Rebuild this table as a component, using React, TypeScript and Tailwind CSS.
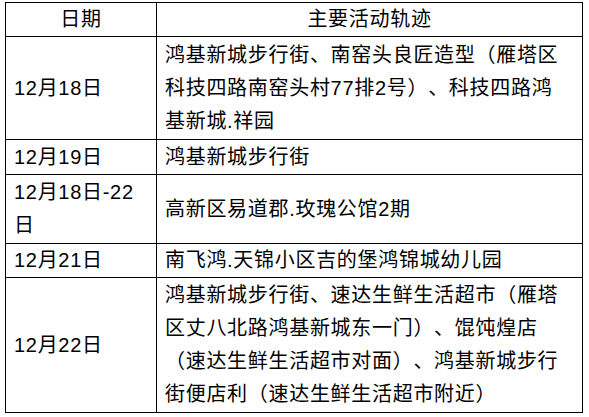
const rows = [
  {
    date: "12月18日",
    place: "鸿基新城步行街、南窑头良匠造型（雁塔区科技四路南窑头村77排2号）、科技四路鸿基新城.祥园",
    h: "h-[103px]",
  },
  { date: "12月19日", place: "鸿基新城步行街", h: "h-[35px]" },
  { date: "12月18日-22日", place: "高新区易道郡.玫瑰公馆2期", h: "h-[69px]" },
  { date: "12月21日", place: "南飞鸿.天锦小区吉的堡鸿锦城幼儿园", h: "h-[34px]" },
  {
    date: "12月22日",
    place: "鸿基新城步行街、速达生鲜生活超市（雁塔区丈八北路鸿基新城东一门）、馄饨煌店（速达生鲜生活超市对面）、鸿基新城步行街便店利（速达生鲜生活超市附近）",
    h: "h-[135px]",
  },
]

export default function App() {
  return (
    <div className="min-h-[417px] bg-white pl-[5px] pt-[2px] font-['Liberation_Sans','Noto_Sans_CJK_SC',sans-serif] text-[20px] leading-[33px] tracking-[0.7px] text-black [text-spacing-trim:space-all]">
      <table className="w-[578px] table-fixed border-collapse">
        <colgroup>
          <col className="w-[151px]" />
          <col />
        </colgroup>
        <thead>
          <tr className="h-[34px]">
            <th className="border border-black px-2 text-center align-middle font-normal">日期</th>
            <th className="border border-black px-2 text-center align-middle font-normal">主要活动轨迹</th>
          </tr>
        </thead>
        <tbody>
          {rows.map((r) => (
            <tr key={r.date} className={r.h}>
              <td className="border border-black py-0 pr-2 pl-2 align-middle">{r.date}</td>
              <td className="border border-black py-0 pr-[18px] pl-2 align-middle">{r.place}</td>
            </tr>
          ))}
        </tbody>
      </table>
    </div>
  )
}
